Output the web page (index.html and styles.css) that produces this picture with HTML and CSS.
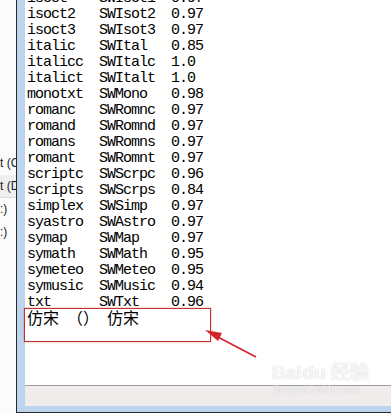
FILE: index.html
```html
<!DOCTYPE html>
<html>

<head>
  <title>acad.fmp</title>
  <link rel="stylesheet" href="styles.css">
</head>

<body>
  <div class="desk">
    <div class="side">
      <div class="side-item">t (C</div>
      <div class="side-item active">t (D</div>
      <div class="side-item">:)</div>
      <div class="side-item">:)</div>
    </div>

    <div class="window">
      <div class="client">
        <div class="list">
          <div class="row"><span>isoct</span><span>SWIsot1</span><span>0.97</span></div>
          <div class="row"><span>isoct2</span><span>SWIsot2</span><span>0.97</span></div>
          <div class="row"><span>isoct3</span><span>SWIsot3</span><span>0.97</span></div>
          <div class="row"><span>italic</span><span>SWItal</span><span>0.85</span></div>
          <div class="row"><span>italicc</span><span>SWItalc</span><span>1.0</span></div>
          <div class="row"><span>italict</span><span>SWItalt</span><span>1.0</span></div>
          <div class="row"><span>monotxt</span><span>SWMono</span><span>0.98</span></div>
          <div class="row"><span>romanc</span><span>SWRomnc</span><span>0.97</span></div>
          <div class="row"><span>romand</span><span>SWRomnd</span><span>0.97</span></div>
          <div class="row"><span>romans</span><span>SWRomns</span><span>0.97</span></div>
          <div class="row"><span>romant</span><span>SWRomnt</span><span>0.97</span></div>
          <div class="row"><span>scriptc</span><span>SWScrpc</span><span>0.96</span></div>
          <div class="row"><span>scripts</span><span>SWScrps</span><span>0.84</span></div>
          <div class="row"><span>simplex</span><span>SWSimp</span><span>0.97</span></div>
          <div class="row"><span>syastro</span><span>SWAstro</span><span>0.97</span></div>
          <div class="row"><span>symap</span><span>SWMap</span><span>0.97</span></div>
          <div class="row"><span>symath</span><span>SWMath</span><span>0.95</span></div>
          <div class="row"><span>symeteo</span><span>SWMeteo</span><span>0.95</span></div>
          <div class="row"><span>symusic</span><span>SWMusic</span><span>0.94</span></div>
          <div class="row"><span>txt</span><span>SWTxt</span><span>0.96</span></div>
          <div class="row cjk">仿宋 （） 仿宋</div>
        </div>
        <div class="status"></div>
      </div>
    </div>
  </div>

  <!-- annotation on top of the screenshot -->
  <div class="mark"></div>
  <svg class="arrow" width="391" height="416" viewBox="0 0 391 416">
    <line x1="256" y1="357" x2="214" y2="335" stroke="#d4262a" stroke-width="1.6" />
    <polygon points="205,330 222,333 218,341" fill="#d4262a" />
  </svg>

  <div class="watermark">
    <div class="wm-logo">Bai<span class="wm-paw">du</span> 经验</div>
    <div class="wm-url">jingyan.baidu.com</div>
  </div>
</body>

</html>
```

FILE: styles.css
```css
body {
  margin: 0;
  width: 391px;
  height: 416px;
  overflow: hidden;
  background: #fff;
  position: relative;
}

.desk {
  display: flex;
  height: 413px;
}

/* bit of the explorer window behind */
.side {
  width: 16px;
  flex-shrink: 0;
  background: #fbfbfb;
  padding-top: 152px;
  overflow: hidden;
  font-family: "Liberation Sans", Arial, sans-serif;
  font-size: 12px;
  color: #222;
}

.side-item {
  height: 23px;
  line-height: 23px;
  white-space: nowrap;
}

.side-item.active {
  background: #efefef;
  border-bottom: 1px solid #dcdcdc;
  height: 22px;
}

.window {
  flex: 1;
  display: flex;
  border-left: 1px solid #2a2a2a;
  border-bottom: 1px solid #2a2a2a;
  background: #bdd4ee;
  padding: 0 0 6px 8px;
}

.client {
  flex: 1;
  display: flex;
  flex-direction: column;
  background: #fff;
}

.list {
  flex: 1;
  overflow: hidden;
  padding-left: 2px;
  margin-top: -9px;
  font-family: "Liberation Mono", "Courier New", monospace;
  font-size: 15px;
  letter-spacing: -1px;
  color: #000;
}

.row {
  display: grid;
  grid-template-columns: 72px 72px auto;
  height: 16px;
  line-height: 16px;
  white-space: nowrap;
}

.row.cjk {
  display: block;
  margin-top: -2px;
  font-family: "Noto Sans CJK SC", sans-serif;
  font-size: 16px;
  letter-spacing: 0;
  word-spacing: -8px;
  text-spacing-trim: space-all;
  font-feature-settings: "fwid" 1;
}

.status {
  height: 20px;
  border-top: 1px solid #9c9c9c;
  background: #f1ecec;
}

.mark {
  position: absolute;
  left: 24px;
  top: 308px;
  width: 187px;
  height: 34px;
  box-sizing: border-box;
  border: 1.5px solid #c4302e;
  box-shadow: 0 0 2px rgba(196, 48, 46, 0.45);
}

.arrow {
  position: absolute;
  left: 0;
  top: 0;
}

.watermark {
  position: absolute;
  left: 272px;
  top: 362px;
  color: rgba(255, 255, 255, 0.85);
  text-shadow: 0 0 1px rgba(120, 120, 120, 0.45);
  font-family: "Liberation Sans", Arial, "Noto Sans CJK SC", sans-serif;
}

.wm-logo {
  font-size: 19px;
  font-weight: bold;
  line-height: 22px;
}

.wm-paw {
  margin-left: 1px;
}

.wm-url {
  font-size: 10px;
  line-height: 12px;
  margin-left: 2px;
  letter-spacing: 0.3px;
}
```
